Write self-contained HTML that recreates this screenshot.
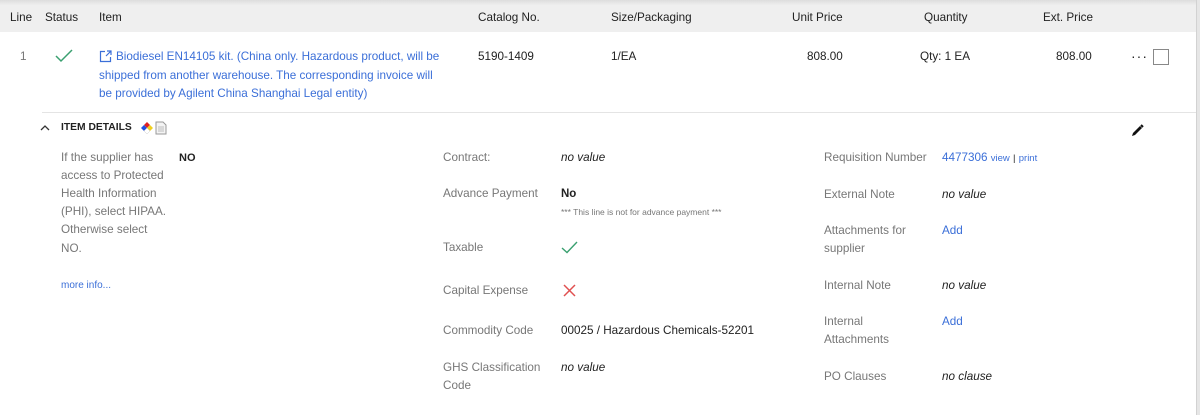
<!DOCTYPE html>
<html><head><meta charset="utf-8"><style>
html,body{margin:0;padding:0;width:1200px;height:415px;overflow:hidden;background:#fff;font-family:"Liberation Sans",Arial,sans-serif;font-size:11.7px;color:#222}
.t{position:absolute;white-space:nowrap;line-height:18px}
.l{color:#777}
.b{color:#3b6fd8}
.i{font-style:italic;color:#222}
.shadow{position:absolute;left:0;top:0;width:1200px;height:5px;background:linear-gradient(#ddd,#eee)}
.hdr{position:absolute;left:0;top:5px;width:1197px;height:27px;background:#efefef}
.rb{position:absolute;left:1196px;top:0;width:4px;height:415px;background:#e6e6e6;border-left:1px solid #d2d2d2}
</style></head><body>
<div class="shadow"></div>
<div class="hdr"></div>
<div class="rb"></div>
<div class="t" style="left:10px;top:9px">Line</div>
<div class="t" style="left:45px;top:9px">Status</div>
<div class="t" style="left:99px;top:9px">Item</div>
<div class="t" style="left:478px;top:9px">Catalog No.</div>
<div class="t" style="left:611px;top:9px">Size/Packaging</div>
<div class="t" style="left:792px;top:9px">Unit Price</div>
<div class="t" style="left:924px;top:9px">Quantity</div>
<div class="t" style="left:1043px;top:9px">Ext. Price</div>

<div class="t l" style="left:20px;top:48px">1</div>
<svg style="position:absolute;left:55px;top:49px" width="18" height="14"><path d="M1 7 L6 12 L17 1" fill="none" stroke="#3aa070" stroke-width="1.5"/></svg>
<svg style="position:absolute;left:99px;top:50px" width="13" height="13"><path d="M6 1.5H1.5V11.5H11.5V7" fill="none" stroke="#3b6fd8" stroke-width="1.2"/><path d="M8 1H12V5M12 1L7 6" fill="none" stroke="#3b6fd8" stroke-width="1.2"/></svg>
<div class="t b" style="left:116px;top:48px">Biodiesel EN14105 kit. (China only. Hazardous product, will be</div>
<div class="t b" style="left:99px;top:67px">shipped from another warehouse. The corresponding invoice will</div>
<div class="t b" style="left:99px;top:85px">be provided by Agilent China Shanghai Legal entity)</div>
<div class="t" style="left:478px;top:48px">5190-1409</div>
<div class="t" style="left:611px;top:48px">1/EA</div>
<div class="t" style="left:807px;top:48px">808.00</div>
<div class="t" style="left:920px;top:48px">Qty: 1 EA</div>
<div class="t" style="left:1056px;top:48px">808.00</div>
<div class="t" style="left:1131px;top:47px;font-size:14px;letter-spacing:1px">···</div>
<div style="position:absolute;left:1153px;top:49px;width:14px;height:14px;border:1px solid #888"></div>
<div style="position:absolute;left:42px;top:112px;width:1154px;height:1px;background:#e4e4e4"></div>

<svg style="position:absolute;left:40px;top:124px" width="10" height="8"><path d="M1 6L5 2L9 6" fill="none" stroke="#333" stroke-width="1.3"/></svg>
<div class="t" style="left:61px;top:119px;font-size:10.3px;font-weight:bold">ITEM DETAILS</div>
<svg style="position:absolute;left:140px;top:121px" width="14" height="14"><path d="M7 1L13 7L7 13L1 7Z" fill="#fff"/><path d="M7 1L4 4L7 7L10 4Z" fill="#e02020"/><path d="M1 7L4 4L7 7L4 10Z" fill="#2050e0"/><path d="M13 7L10 4L7 7L10 10Z" fill="#f0d020"/><path d="M7 13L4 10L7 7L10 10Z" fill="#fff" stroke="#ccc" stroke-width=".5"/></svg>
<svg style="position:absolute;left:155px;top:121px" width="12" height="14"><path d="M1 1H8L11 4V13H1Z" fill="#f4f4f4" stroke="#999"/><path d="M3 6H9M3 8H9M3 10H9" stroke="#bbb"/></svg>
<svg style="position:absolute;left:1131px;top:124px" width="13" height="13"><path d="M1 12L2 9L9 2L11 4L4 11Z" fill="#111"/><path d="M10 1L12 3" stroke="#111" stroke-width="2"/></svg>

<div class="t l" style="left:61px;top:149px">If the supplier has</div>
<div class="t l" style="left:61px;top:167px">access to Protected</div>
<div class="t l" style="left:61px;top:185px">Health Information</div>
<div class="t l" style="left:61px;top:203px">(PHI), select HIPAA.</div>
<div class="t l" style="left:61px;top:221px">Otherwise select</div>
<div class="t l" style="left:61px;top:240px">NO.</div>
<div class="t" style="left:179px;top:149px;font-weight:bold;font-size:11px">NO</div>
<div class="t b" style="left:61px;top:277px;font-size:10px">more info...</div>

<div class="t l" style="left:443px;top:149px">Contract:</div>
<div class="t i" style="left:561px;top:149px">no value</div>
<div class="t l" style="left:443px;top:185px">Advance Payment</div>
<div class="t" style="left:561px;top:185px;font-weight:bold;font-size:11.5px">No</div>
<div class="t l" style="left:561px;top:203px;font-size:8.5px">*** This line is not for advance payment ***</div>
<div class="t l" style="left:443px;top:239px">Taxable</div>
<svg style="position:absolute;left:561px;top:241px" width="17" height="13"><path d="M1 7L6 11.5L16 1" fill="none" stroke="#3aa070" stroke-width="1.4"/></svg>
<div class="t l" style="left:443px;top:282px">Capital Expense</div>
<svg style="position:absolute;left:563px;top:284px" width="13" height="13"><path d="M1 1L12 12M12 1L1 12" stroke="#e05050" stroke-width="1.5"/></svg>
<div class="t l" style="left:443px;top:322px">Commodity Code</div>
<div class="t" style="left:561px;top:322px">00025 / Hazardous Chemicals-52201</div>
<div class="t l" style="left:443px;top:359px">GHS Classification</div>
<div class="t l" style="left:443px;top:377px">Code</div>
<div class="t i" style="left:561px;top:359px">no value</div>

<div class="t l" style="left:824px;top:149px">Requisition Number</div>
<div class="t" style="left:942px;top:149px"><span class="b">4477306</span> <span class="b" style="font-size:9.5px">view</span> <span style="font-size:9.5px">|</span> <span class="b" style="font-size:9.5px">print</span></div>
<div class="t l" style="left:824px;top:186px">External Note</div>
<div class="t i" style="left:942px;top:186px">no value</div>
<div class="t l" style="left:824px;top:222px">Attachments for</div>
<div class="t l" style="left:824px;top:240px">supplier</div>
<div class="t b" style="left:942px;top:222px">Add</div>
<div class="t l" style="left:824px;top:277px">Internal Note</div>
<div class="t i" style="left:942px;top:277px">no value</div>
<div class="t l" style="left:824px;top:313px">Internal</div>
<div class="t l" style="left:824px;top:331px">Attachments</div>
<div class="t b" style="left:942px;top:313px">Add</div>
<div class="t l" style="left:824px;top:368px">PO Clauses</div>
<div class="t i" style="left:942px;top:368px">no clause</div>
</body></html>
